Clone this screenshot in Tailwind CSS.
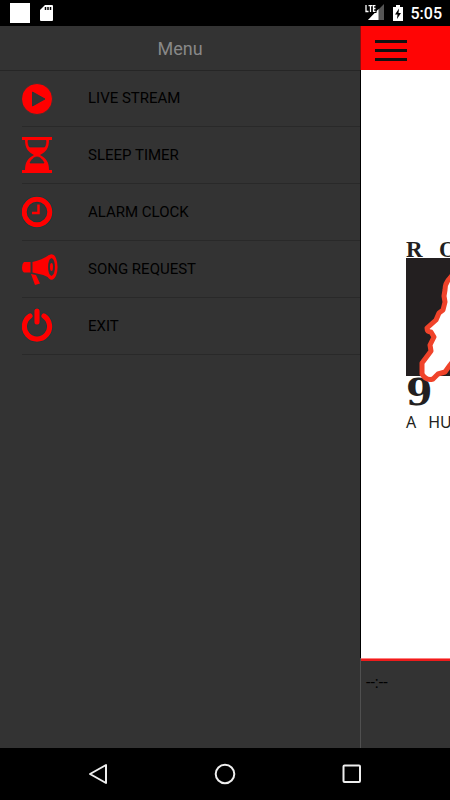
<!DOCTYPE html>
<html lang="en">
<head>
    <meta charset="UTF-8">
    <meta name="viewport" content="width=device-width, initial-scale=1.0">
    <title>Menu</title>
    <script src="https://cdn.jsdelivr.net/npm/@tailwindcss/browser@4"></script>
</head>
<body class="bg-black font-[Roboto,sans-serif]">
<div class="flex flex-col h-screen overflow-hidden">

    <!-- Status bar -->
    <header class="h-[26px] shrink-0 bg-black text-white flex items-center justify-between pl-[10px] pr-2">
        <div class="flex items-center gap-[10px]">
            <div class="size-5 bg-white"></div>
            <svg class="w-[13px] h-4" viewBox="0 0 13 16">
                <path d="M5 0h7q1 0 1 1v14q0 1-1 1H1q-1 0-1-1V5z" fill="#fff"/>
                <path d="M5.500 2v3M8 2v3M10.500 2v3" stroke="#000" stroke-width="1.500"/>
            </svg>
        </div>
        <div class="flex items-center">
            <svg class="w-5 h-[18px]" viewBox="0 0 20 18">
                <path d="M19 0v16H3z" fill="#555"/>
                <path d="M13.500 5v11H3z" fill="#fff"/>
                <path d="M0 0h11.500v9H0z" fill="#000"/>
                <path d="M1 1v6.500H3.500M3.500 1.700h4M5.500 1.500v6.500M10.500 1.700H8.500v5.600h2M8.500 4.500h2" fill="none" stroke="#fff" stroke-width="1.300"/>
            </svg>
            <svg class="ml-2 w-[10px] h-4" viewBox="0 0 10 16">
                <path d="M3 0h4v2h3v14H0V2h3z" fill="#fff"/>
                <path d="M6 3.500L2 9.500h2.500L4 14l4-6H5.500z" fill="#000"/>
            </svg>
            <span class="ml-2 pt-[2px] text-[16px] leading-5 font-medium">5:05</span>
        </div>
    </header>

    <div class="flex flex-1 min-h-0">
        <!-- Drawer -->
        <nav class="w-4/5 shrink-0 bg-[#333333]">
            <h1 class="h-[45px] border-b border-[#262626] flex items-center justify-center text-[18px] text-[#888888]">Menu</h1>
            <ul class="pl-[22px] text-[15px] text-black">
                <li class="h-[56px] border-b border-[#292929]">
                    <a href="#live" class="flex items-center h-full">
                        <span class="w-[66px]">
                            <svg class="w-9 h-9" viewBox="0 0 36 36">
                                <circle cx="15" cy="18" r="15.500" fill="#f00" stroke="#123c3c" stroke-width=".7"/>
                                <path d="M10.500 11v14L23 18z" fill="#333" stroke="#123c3c" stroke-width=".8"/>
                            </svg>
                        </span>
                        LIVE STREAM
                    </a>
                </li>
                <li class="h-[57px] border-b border-[#292929]">
                    <a href="#sleep" class="flex items-center h-full">
                        <span class="w-[66px]">
                            <svg class="w-9 h-9" viewBox="0 0 36 36">
                                <path d="M0 0h30v3H0zM0 33h30v3H0z" fill="#f00"/>
                                <path d="M3 3h24c0 8-3 12-9 15 6 3 9 7 9 15H3c0-8 3-12 9-15C6 15 3 11 3 3z" fill="#f00"/>
                                <path d="M6 3.500h18c0 3-.5 5-1.500 6.500h-15C6.500 8.500 6 6.500 6 3.500zM8 26c1.500-3.500 4-6 7-6s5.500 2.500 7 6z" fill="#333" stroke="#123c3c" stroke-width=".7"/>
                            </svg>
                        </span>
                        SLEEP TIMER
                    </a>
                </li>
                <li class="h-[57px] border-b border-[#292929]">
                    <a href="#alarm" class="flex items-center h-full">
                        <span class="w-[66px]">
                            <svg class="w-9 h-9" viewBox="0 0 36 36">
                                <circle cx="15" cy="18" r="12.800" fill="none" stroke="#123c3c" stroke-width="6.500"/>
                                <circle cx="15" cy="18" r="12.800" fill="none" stroke="#f00" stroke-width="5"/>
                                <path d="M16.500 10.500v8.500H10" fill="none" stroke="#f00" stroke-width="2.500"/>
                            </svg>
                        </span>
                        ALARM CLOCK
                    </a>
                </li>
                <li class="h-[57px] border-b border-[#292929]">
                    <a href="#request" class="flex items-center h-full">
                        <span class="w-[66px]">
                            <svg class="w-9 h-9" viewBox="0 0 36 36">
                                <path d="M2 11h6.500v10.500H2q-2-1-2-5t2-5.500zM10.500 11Q20 9 27 4q-3 12 1 23-8-4-17.500-5.500zM9 23l5 1 4 8.500-5 1.500z" fill="#f00"/>
                                <ellipse cx="29.500" cy="16" rx="4.800" ry="11.500" fill="#f00" stroke="#f00" stroke-width="2.500"/>
                                <ellipse cx="29.500" cy="16" rx="3" ry="8.500" fill="#333" stroke="#123c3c" stroke-width=".7"/>
                                <ellipse cx="29.500" cy="16" rx="1.500" ry="4" fill="#f00"/>
                            </svg>
                        </span>
                        SONG REQUEST
                    </a>
                </li>
                <li class="h-[57px] border-b border-[#292929]">
                    <a href="#exit" class="flex items-center h-full">
                        <span class="w-[66px]">
                            <svg class="w-9 h-9" viewBox="0 0 36 36" fill="none" stroke-linecap="round">
                                <path d="M8 8A12.600 12.600 0 1 0 22 8M15 3v11" stroke="#123c3c" stroke-width="6.500"/>
                                <path d="M8 8A12.600 12.600 0 1 0 22 8M15 3v11" stroke="#f00" stroke-width="5.200"/>
                            </svg>
                        </span>
                        EXIT
                    </a>
                </li>
            </ul>
        </nav>

        <!-- Page pushed aside by the drawer -->
        <main class="flex-1 min-w-0 flex flex-col overflow-hidden">
            <div class="h-11 shrink-0 bg-[#ff0505] border-l border-[#8a1010] flex items-center pl-[14px]">
                <button type="button" aria-label="Toggle menu" class="flex flex-col gap-[6px] w-8 pt-[5px]">
                    <span class="h-[3px] w-full bg-[#111111]"></span>
                    <span class="h-[3px] w-full bg-[#111111]"></span>
                    <span class="h-[3px] w-full bg-[#111111]"></span>
                </button>
            </div>
            <div class="flex-1 min-h-0 bg-white border-l border-black flex flex-col justify-center pl-[45px] text-[#231f20]">
                <!-- Station logo -->
                <div class="w-[200px] pb-[52px] font-['DejaVu_Serif',serif] font-bold">
                    <div class="flex gap-[13px] text-[23px] leading-4 font-['Liberation_Serif',serif]">
                        <span class="w-5">R</span>
                        <span>O</span>
                    </div>
                    <svg class="relative z-10 w-40 h-[118px] overflow-visible" viewBox="0 0 160 118">
                        <path d="M0 0h160v118H0z" fill="#231f20"/>
                        <path d="M60 0L44 20q-5 5-5 12l-1 6 1 6-2 8-4 3-3 7-9 8q0 4 4 4l3 5-4 8 1 6-9 12v11q4 7 11 5l5-5 7-2 5-7 16-20z" fill="#fff" stroke="#f0432a" stroke-width="5" stroke-linejoin="round"/>
                    </svg>
                    <div class="text-[38px] leading-[32px]">9</div>
                    <div class="flex gap-3 pt-[2px] text-[16px] leading-6 font-normal font-['Noto_Sans',sans-serif]">
                        <span>A</span>
                        <span>HUMAN</span>
                    </div>
                </div>
            </div>
            <footer class="h-[90px] shrink-0 bg-[#333333] border-l border-[#505050]">
                <div class="h-[3px] bg-[#ee1c1c] border-t border-[#ff8080]"></div>
                <p class="pl-[5px] pt-[10px] text-[16px] leading-6 text-black">--:--</p>
            </footer>
        </main>
    </div>

    <!-- Android navigation -->
    <div class="h-[52px] shrink-0 bg-black flex items-center justify-between px-[86px]">
        <button type="button" aria-label="Back">
            <svg class="size-6" viewBox="0 0 24 24"><path d="M20 3v18L4 12z" fill="none" stroke="#eee" stroke-width="2" stroke-linejoin="round"/></svg>
        </button>
        <button type="button" aria-label="Home">
            <svg class="size-6" viewBox="0 0 24 24"><circle cx="12" cy="12" r="9.300" fill="none" stroke="#eee" stroke-width="2"/></svg>
        </button>
        <button type="button" aria-label="Recent apps">
            <svg class="size-6" viewBox="0 0 24 24"><rect x="3.500" y="3.500" width="16.500" height="16.500" rx="1" fill="none" stroke="#eee" stroke-width="2"/></svg>
        </button>
    </div>
</div>
</body>
</html>
